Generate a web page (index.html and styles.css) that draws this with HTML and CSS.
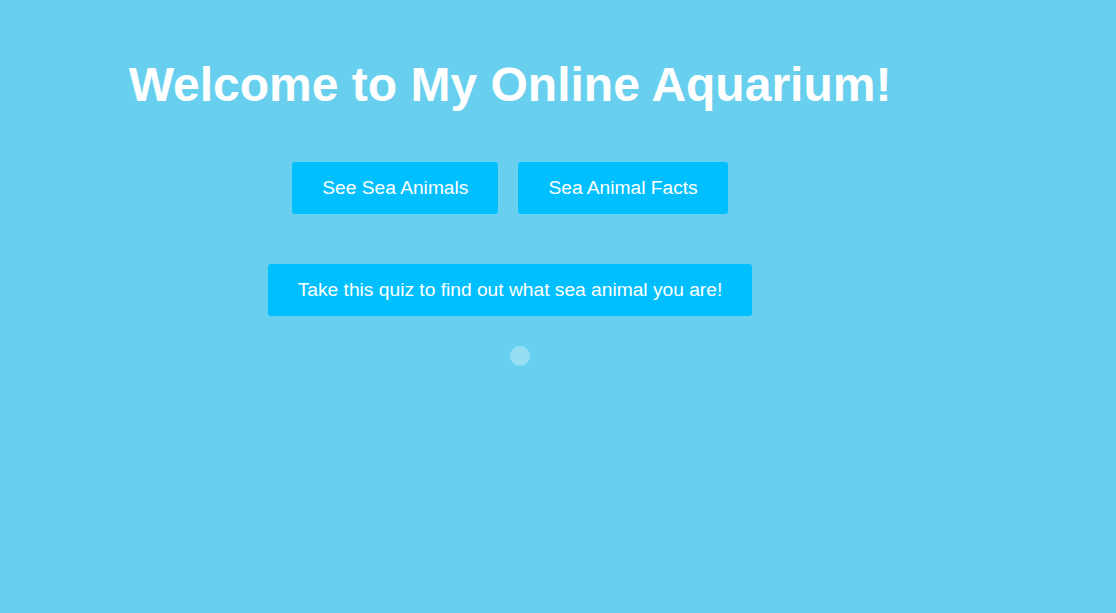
FILE: index.html
```html
<!DOCTYPE html>
<html lang="en">
<head>
<meta charset="utf-8">
<title>My Online Aquarium</title>
<link rel="stylesheet" href="styles.css">
</head>
<body>
<main class="page">
  <h1 class="title">Welcome to My Online Aquarium!</h1>
  <div class="nav">
    <button class="btn">See Sea Animals</button>
    <button class="btn">Sea Animal Facts</button>
  </div>
  <button class="btn quiz">Take this quiz to find out what sea animal you are!</button>
  <div class="dot"></div>
</main>
</body>
</html>
```
FILE: styles.css
```css
html, body {
  margin: 0;
  padding: 0;
  background: #68d0ee;
  height: 100%;
}
body {
  font-family: "Liberation Sans", Arial, sans-serif;
  color: #fff;
}
.page {
  width: 1020px;
  display: flex;
  flex-direction: column;
  align-items: center;
  padding-top: 57px;
}
.title {
  margin: 0;
  font-size: 48px;
  font-weight: bold;
  line-height: 55px;
  color: #fff;
}
.nav {
  display: flex;
  gap: 20px;
  margin-top: 50px;
}
.btn {
  font-family: "Liberation Sans", Arial, sans-serif;
  font-size: 19.2px;
  color: #fff;
  background: #00bfff;
  border: none;
  border-radius: 3px;
  height: 52px;
  padding: 0 30px;
  cursor: pointer;
}
.quiz {
  margin-top: 50px;
}
.dot {
  width: 20px;
  height: 20px;
  border-radius: 50%;
  background: rgba(255, 255, 255, 0.3);
  margin-top: 30px;
  margin-left: 20px;
}
```
